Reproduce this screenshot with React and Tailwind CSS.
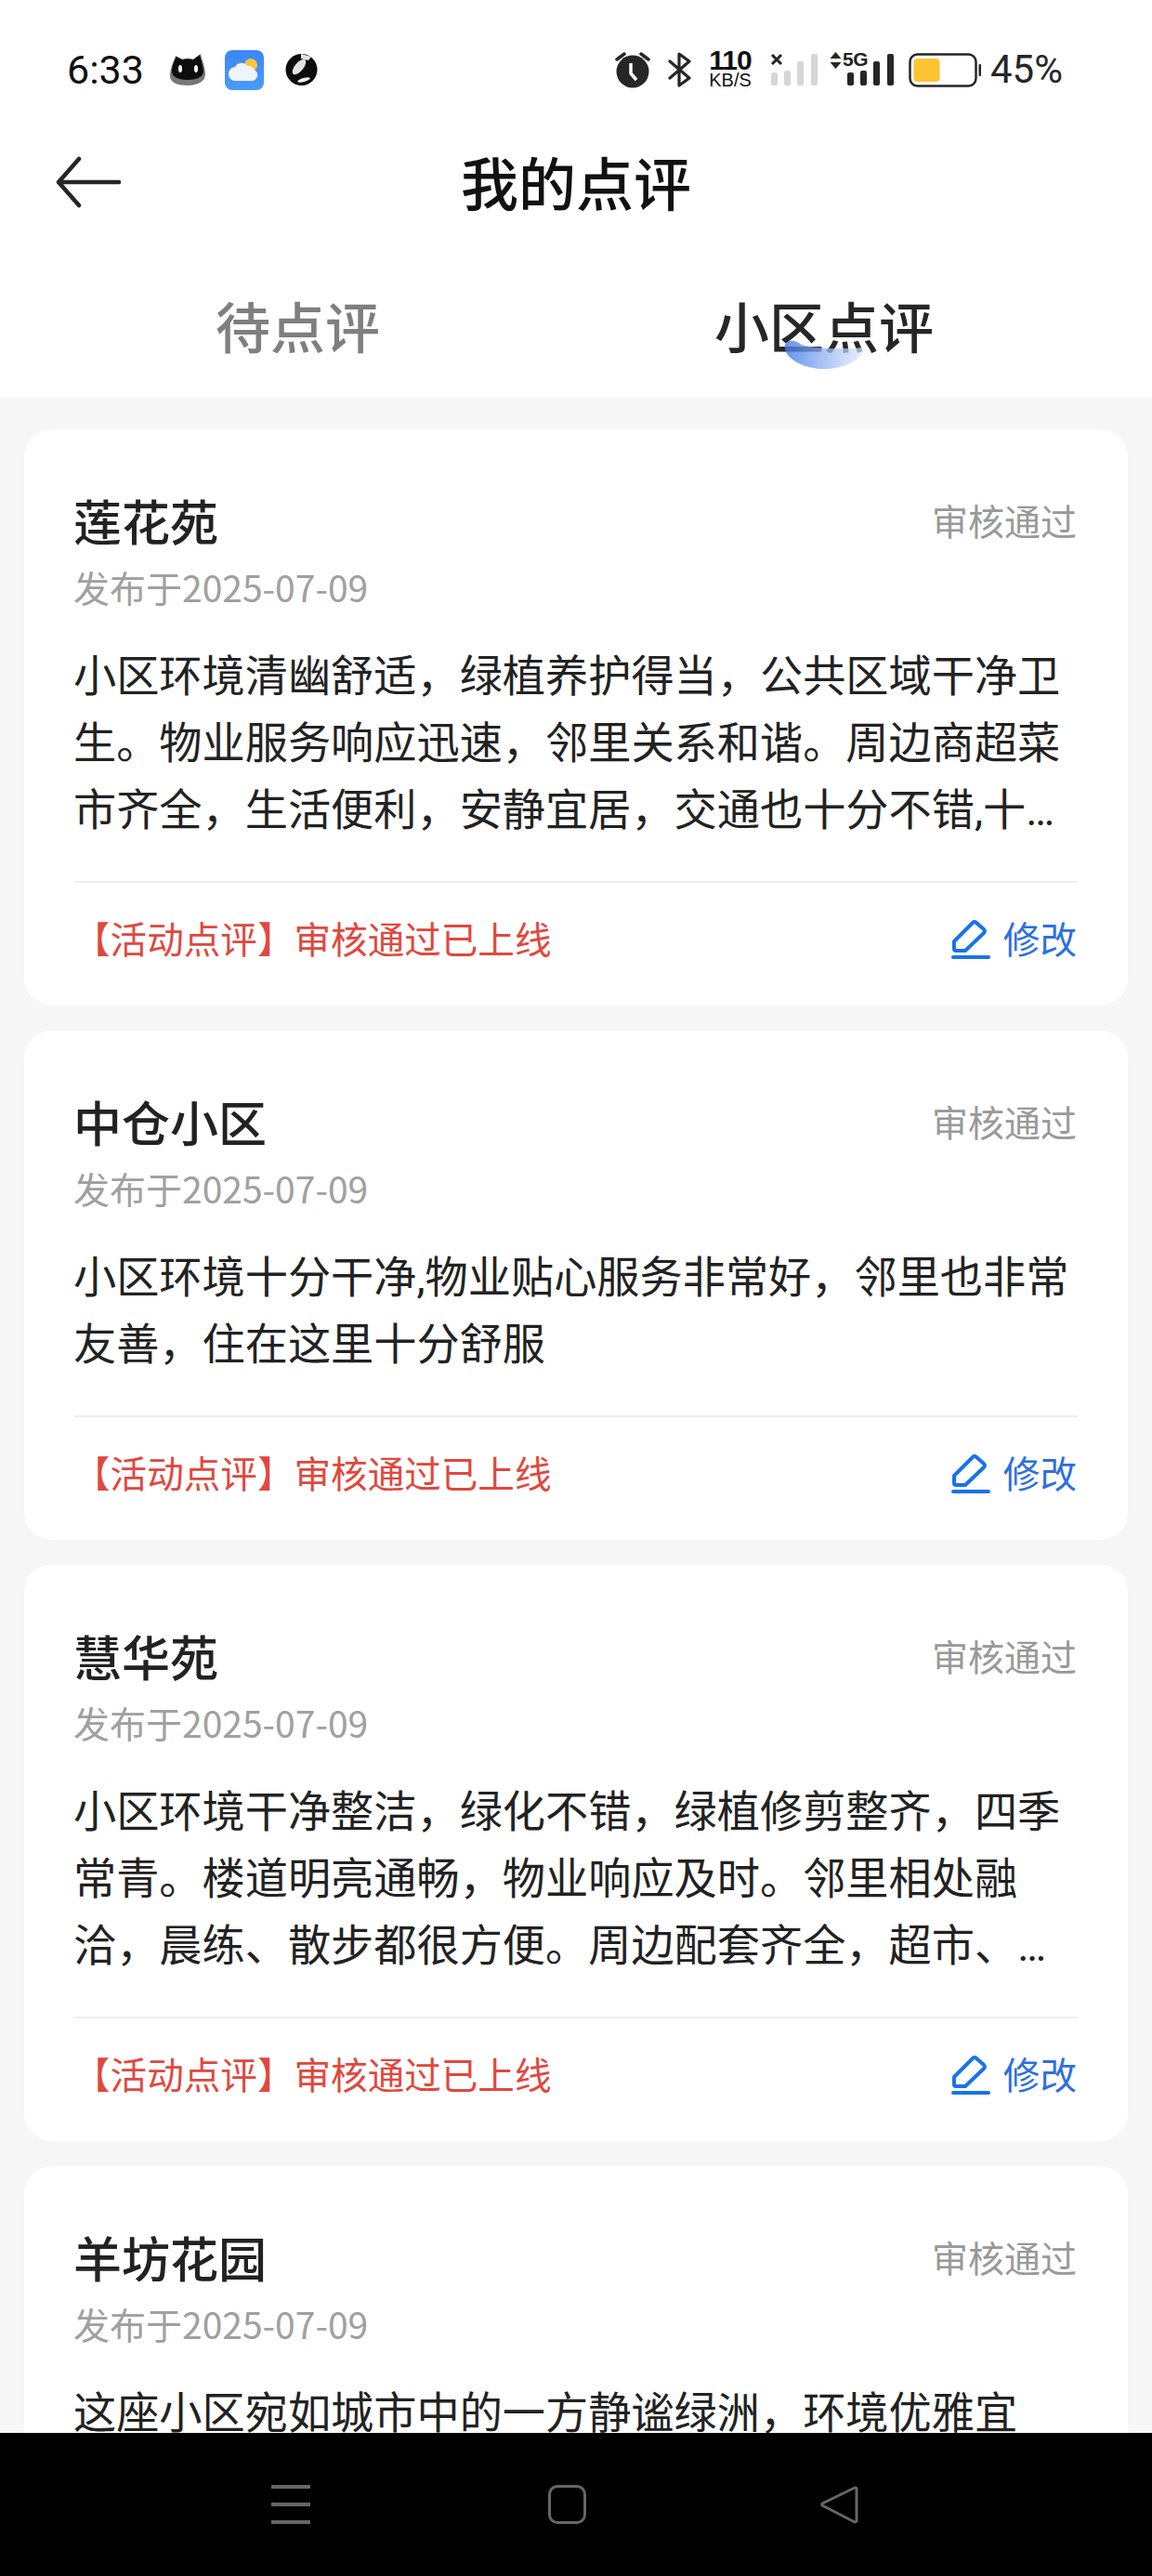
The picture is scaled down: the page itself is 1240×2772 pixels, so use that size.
const cards = [
  {
    title: "莲花苑",
    text: "小区环境清幽舒适，绿植养护得当，公共区域干净卫生。物业服务响应迅速，邻里关系和谐。周边商超菜市齐全，生活便利，安静宜居，交通也十分不错,十分适合家庭长期居住，值得推荐给大家。",
    clamp: true,
  },
  { title: "中仓小区", text: "小区环境十分干净,物业贴心服务非常好，邻里也非常友善，住在这里十分舒服" },
  {
    title: "慧华苑",
    text: "小区环境干净整洁，绿化不错，绿植修剪整齐，四季常青。楼道明亮通畅，物业响应及时。邻里相处融洽，晨练、散步都很方便。周边配套齐全，超市、菜场、学校和医院都在步行范围之内，生活非常便利。",
    clamp: true,
  },
  { title: "羊坊花园", text: "这座小区宛如城市中的一方静谧绿洲，环境优雅宜人，绿树成荫，四季花香，物业服务也十分周到。", clamp: true },
];

function Bars({ color }) {
  return (
    <svg width="52" height="36" viewBox="0 0 52 36" fill={color} className="block">
      <rect x="1" y="20" width="7" height="14" rx="2" />
      <rect x="15" y="18" width="7" height="16" rx="2" />
      <rect x="29" y="8" width="7" height="26" rx="2" />
      <rect x="44" y="0" width="7" height="34" rx="2" />
    </svg>
  );
}

function StatusBar() {
  return (
    <div className="h-[100px] pt-[50px] flex items-start">
      <div className="h-[50px] w-full flex items-center text-[#111] font-['Roboto',sans-serif]">
        <span className="ml-[72px] w-[110px] text-[43px] leading-none">6:33</span>
        <svg width="40" height="36" viewBox="0 0 40 36" className="block">
          <path d="M1 25C1 16 5 9 7 3l7 4c4-1 8-1 12 0l8-6c1 6 5 14 5 22 0 8-9 12-19 12S1 32 1 25z" fill="#777" />
          <path d="M3 20C3 14 6 8 8 4l6 3c4-1 8-1 12 0l7-5c1 5 4 12 4 18 0 6-8 9-17 9S3 26 3 20z" fill="#0d0d0d" />
          <ellipse cx="12" cy="17" rx="2" ry="4" fill="#fff" />
          <ellipse cx="29" cy="17" rx="2" ry="4" fill="#fff" />
        </svg>
        <svg width="42" height="43" viewBox="0 0 42 43" className="block ml-[20px]">
          <defs>
            <linearGradient id="sky" x1="0" y1="0" x2="0" y2="1">
              <stop offset="0" stopColor="#3d85f5" />
              <stop offset="1" stopColor="#4a9cf8" />
            </linearGradient>
          </defs>
          <rect width="42" height="43" rx="8" fill="url(#sky)" />
          <circle cx="28" cy="16" r="7" fill="#fcc63a" />
          <path d="M12 33a7.500 7.500 0 0 1-1-15c2-5 10-6 13-1 3-1 7 1 7 4 3 1 5 4 4 7-1 3-3 5-7 5z" fill="#eef4fb" />
        </svg>
        <svg width="35" height="36" viewBox="0 0 35 36" className="block ml-[23px]">
          <circle cx="17.500" cy="18" r="17" fill="#0c0c0c" />
          <ellipse cx="15" cy="15" rx="10" ry="4.500" transform="rotate(-50 15 15)" fill="#e4e4e4" />
          <ellipse cx="20" cy="29" rx="7" ry="2" transform="rotate(-15 20 29)" fill="#f2f2f2" />
          <path d="M17 1l11 3-3 4-8-2z" fill="#e5e5e5" />
        </svg>

        <svg width="38" height="40" viewBox="0 0 38 40" className="block ml-[320px]">
          <circle cx="19" cy="22" r="17.500" fill="#262626" />
          <path d="M17 13v11l6 7" fill="none" stroke="#fff" strokeWidth="3.500" strokeLinejoin="round" />
          <path d="M2 9l8-6M36 9l-8-6" stroke="#262626" strokeWidth="3.500" strokeLinecap="round" />
        </svg>
        <svg width="28" height="38" viewBox="0 0 28 38" className="block ml-[18px]" fill="none" stroke="#262626" strokeWidth="3.200" strokeLinejoin="round" strokeLinecap="round">
          <path d="M3 10l21 18-11 8V2l11 8L3 28" />
        </svg>
        <div className="ml-[14px] w-[52px] flex flex-col items-center font-['Liberation_Sans',sans-serif]">
          <span className="text-[30px] leading-[24px] font-bold tracking-[-1px] mt-[-2px]">110</span>
          <span className="text-[20px] leading-[19px] font-medium">KB/S</span>
        </div>
        <div className="relative ml-[17px] w-[52px] h-[36px] mt-[2px]">
          <Bars color="#d6d6d6" />
          <svg width="14" height="14" viewBox="0 0 14 14" className="absolute left-0 -top-[1px]" stroke="#262626" strokeWidth="3">
            <path d="M2 2l10 10M12 2L2 12" />
          </svg>
        </div>
        <div className="relative ml-[12px] w-[70px] h-[36px] mt-[2px]">
          <div className="absolute right-0 top-0"><Bars color="#262626" /></div>
          <svg width="13" height="18" viewBox="0 0 13 18" className="absolute left-0 -top-[2px]" fill="#262626">
            <path d="M6.500 0L12.500 7H.500zM6.500 18L.500 11h12z" />
          </svg>
          <span className="absolute left-[14px] -top-[5px] text-[21px] leading-[22px] font-bold tracking-[-0.500px] text-[#222] font-['Liberation_Sans',sans-serif]">5G</span>
        </div>
        <svg width="78" height="38" viewBox="0 0 78 38" className="block ml-[15px] mt-[2px]">
          <rect x="1.500" y="1.500" width="71" height="34" rx="8" fill="#fff" stroke="#262626" strokeWidth="2.500" />
          <rect x="5.500" y="6" width="28" height="25" rx="4" fill="#fcc431" />
          <rect x="75.500" y="12" width="2.500" height="13" rx="1" fill="#262626" />
        </svg>
        <span className="ml-[10px] text-[42px] leading-none text-[#262626]">45%</span>
      </div>
    </div>
  );
}

function NavBar() {
  return (
    <div className="h-[154px] shrink-0 bg-black flex items-start pt-[56px]">
      <div className="ml-[292px] w-[42px] h-[42px] flex flex-col justify-between">
        <div className="h-[4px] bg-[#666]" />
        <div className="h-[4px] bg-[#666]" />
        <div className="h-[4px] bg-[#666]" />
      </div>
      <div className="ml-[256px] w-[41px] h-[42px] rounded-[10px] border-[3px] border-[#666]" />
      <svg width="42" height="42" viewBox="0 0 42 42" className="block ml-[251px]" fill="none" stroke="#666" strokeWidth="3" strokeLinejoin="round">
        <path d="M38 3L3 20a2 2 0 0 0 0 2l35 18c1 0 2-1 2-1V4c0-1-1-1-2-1z" />
      </svg>
    </div>
  );
}

function Card({ title, text, clamp }) {
  return (
    <div className="bg-white rounded-[30px] px-[54px] pt-[62px] shrink-0">
      <div className="flex justify-between items-start">
        <h2 className="text-[52px] leading-[72px] text-[#222] font-medium ml-[-1px]">{title}</h2>
        <span className="text-[39px] leading-[48px] text-[#999] mt-[11px] mr-[1px]">审核通过</span>
      </div>
      <p className="mt-[11px] text-[39px] leading-[48px] text-[#a0a0a0] ml-[-1px]">发布于2025-07-09</p>
      <p className={clamp ? "mt-[37px] ml-[-1px] text-[46.200px] leading-[72px] text-[#222] line-clamp-3 font-['Roboto','Noto_Sans_CJK_SC',sans-serif]" : "mt-[37px] ml-[-1px] text-[46.200px] leading-[72px] text-[#222] font-['Roboto','Noto_Sans_CJK_SC',sans-serif]"}>{text}</p>
      <div className="mt-[40px] h-[2px] bg-[#eeeeee]" />
      <div className="h-[132px] pb-[14px] flex items-center justify-between">
        <span className="text-[39.600px] text-[#e0483e] ml-[-1px]">【活动点评】审核通过已上线</span>
        <span className="flex items-center text-[39.600px] text-[#2d6fdf] mr-[1px]">
          <svg width="42" height="42" viewBox="0 0 42 42" fill="none" stroke="#1a73e8" strokeWidth="4" strokeLinecap="round" strokeLinejoin="round" className="block mr-[14px] mt-[4px]">
            <path d="M3 23L23 3a3 3 0 0 1 4 0l8 7a3 3 0 0 1 0 4L15 33H5a2 2 0 0 1-2-2z" />
            <path d="M2 40h38" />
          </svg>
          修改
        </span>
      </div>
    </div>
  );
}

export default function App() {
  return (
    <div className="w-[1240px] h-[2772px] flex flex-col overflow-hidden bg-[#f7f7f7] font-['Noto_Sans_CJK_SC',sans-serif]">
      <div className="bg-white h-[428px] shrink-0">
        <StatusBar />
        <div className="h-[190px] relative flex items-center justify-center">
          <svg width="70" height="56" viewBox="0 0 70 56" className="absolute left-[60px] top-[68px]" fill="none" stroke="#262626" strokeWidth="4.500" strokeLinecap="round" strokeLinejoin="round">
            <path d="M68 28H4M25 3L3 28l22 25" />
          </svg>
          <h1 className="text-[62px] leading-none font-medium text-[#111]">我的点评</h1>
        </div>
        <div className="flex items-center h-[100px] mt-[9px] text-[59px] leading-none">
          <span className="ml-[232px] text-[#7f7f7f] font-medium">待点评</span>
          <span className="relative ml-[360px] text-[#262626] font-medium">
            小区点评
            <svg width="86" height="32" viewBox="0 0 86 32" className="absolute left-[75px] top-[46px]">
              <defs>
                <linearGradient id="blob" x1="0" y1="0" x2="1" y2="0">
                  <stop offset="0" stopColor="#3f78e8" stopOpacity="0.8" />
                  <stop offset="1" stopColor="#dfe9fb" stopOpacity="0.7" />
                </linearGradient>
              </defs>
              <path d="M1 5C4-1 12 0 19 5c12 4 42 5 66 3 3 10-18 23-42 23C18 31-2 17 1 5z" fill="url(#blob)" />
            </svg>
          </span>
        </div>
      </div>
      <div className="flex-1 min-h-0 overflow-hidden px-[26px] pt-[34px] flex flex-col gap-[27px]">
        {cards.map((c) => (
          <Card key={c.title} {...c} />
        ))}
      </div>
      <NavBar />
    </div>
  );
}
